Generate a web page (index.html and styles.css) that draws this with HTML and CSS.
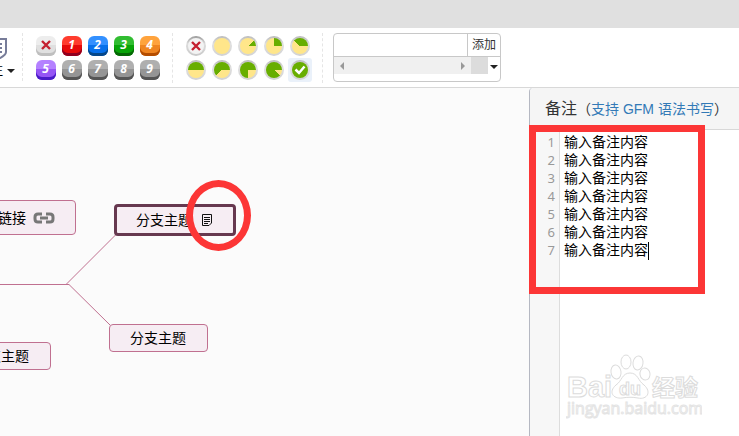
FILE: index.html
```html
<!DOCTYPE html>
<html lang="zh-CN">
<head>
<meta charset="utf-8">
<title>脑图</title>
<link rel="stylesheet" href="styles.css">
</head>
<body>
<div class="titlebar"></div>
<header class="toolbar">
  <button class="note-button" type="button">
    <svg class="note-icon" width="20" height="22" viewBox="0 0 20 22"><path d="M1 1H19V14Q19 17 13 20H1Z" fill="#fff" stroke="#777c99" stroke-width="2"/><path d="M4 6H15M4 10H15M4 14H15" stroke="#777c99" stroke-width="2"/></svg>
    <span class="note-label">备注<i class="caret"></i></span>
  </button>
  <div class="icon-grid priorities">
    <button type="button" aria-label="移除优先级"><span class="badge none"><svg width="10" height="10" viewBox="0 0 10 10"><path d="M1 1L9 9M9 1L1 9" stroke="#c42030" stroke-width="2.4"/></svg></span></button>
    <button type="button"><span class="badge p1">1</span></button>
    <button type="button"><span class="badge p2">2</span></button>
    <button type="button"><span class="badge p3">3</span></button>
    <button type="button"><span class="badge p4">4</span></button>
    <button type="button"><span class="badge p5">5</span></button>
    <button type="button"><span class="badge">6</span></button>
    <button type="button"><span class="badge">7</span></button>
    <button type="button"><span class="badge">8</span></button>
    <button type="button"><span class="badge">9</span></button>
  </div>
  <div class="icon-grid progress">
    <button type="button" aria-label="移除进度"><span class="pie clear"><svg width="10" height="10" viewBox="0 0 10 10"><path d="M1 1L9 9M9 1L1 9" stroke="#c42030" stroke-width="2.4"/></svg></span></button>
    <button type="button" aria-label="未开始"><span class="pie"></span></button>
    <button type="button" aria-label="完成 1/8"><span class="pie e1"></span></button>
    <button type="button" aria-label="完成 1/4"><span class="pie e2"></span></button>
    <button type="button" aria-label="完成 3/8"><span class="pie e3"></span></button>
    <button type="button" aria-label="完成一半"><span class="pie e4"></span></button>
    <button type="button" aria-label="完成 5/8"><span class="pie e5"></span></button>
    <button type="button" aria-label="完成 3/4"><span class="pie e6"></span></button>
    <button type="button" aria-label="完成 7/8"><span class="pie e7"></span></button>
    <button type="button" class="active" aria-label="已完成"><span class="pie e8"><svg width="12" height="10" viewBox="0 0 12 10"><path d="M1.5 4.5L5 8L10.5 1.5" fill="none" stroke="#fff" stroke-width="2.5"/></svg></span></button>
  </div>
  <div class="tag-box">
    <form class="tag-form">
      <input type="text" aria-label="标签">
      <button type="button">添加</button>
    </form>
    <div class="tag-list">
      <div class="track"><i class="arrow left"></i><i class="arrow right"></i></div>
      <div class="corner"></div>
      <button class="more" type="button" aria-label="展开标签"><i class="caret"></i></button>
    </div>
  </div>
</header>
<div class="workspace">
  <main class="canvas">
    <svg class="edges" width="240" height="260" viewBox="0 88 240 260" fill="none" stroke="#c07090"><path d="M0 284.5H69L110 325"/><path d="M66 284.5L116 234.5"/></svg>
    <div class="node link-node">链接<svg width="22" height="12" viewBox="0 0 22 12" fill="none" stroke="#777" stroke-width="3"><path d="M9 2H5Q2 2 2 5V7Q2 10 5 10H9M13 2H17Q20 2 20 5V7Q20 10 17 10H13M7 6H15"/></svg></div>
    <div class="node selected-node">分支主题<svg width="10" height="12" viewBox="0 0 10 12" fill="none" stroke="#111"><path d="M.5 .5H9.5V9L7 11.5H.5ZM2 3.5H8M2 5.5H8M2 7.5H8M2 9.5H6"/></svg></div>
    <div class="node branch-node">分支主题</div>
    <div class="node corner-node">分支主题</div>
    <div class="ring"></div>
  </main>
  <aside class="notes">
    <h2>备注<small>（<a href="#gfm">支持 GFM 语法书写</a>）</small></h2>
    <div class="editor">
      <div class="gutter"><span>1</span><span>2</span><span>3</span><span>4</span><span>5</span><span>6</span><span>7</span></div>
      <textarea aria-label="备注" spellcheck="false">输入备注内容
输入备注内容
输入备注内容
输入备注内容
输入备注内容
输入备注内容
输入备注内容</textarea>
      <i class="cursor"></i>
    </div>
    <div class="frame"></div>
    <svg class="watermark" width="136" height="70" viewBox="0 0 136 70" fill="#fff" stroke="#dcdcdc">
      <g class="brand"><text x="1" y="45" font-size="29">Bai</text><text x="86" y="44" font-size="23">经验</text></g>
      <path d="M64 21C56 21 56 29 50 33C42 40 47 47 56 46C62 45 66 45 72 46C81 48 86 40 78 33C72 29 72 21 64 21Z"/>
      <ellipse cx="50" cy="20" rx="5" ry="7" transform="rotate(-8 50 20)"/><ellipse cx="60" cy="10" rx="5" ry="7"/><ellipse cx="72" cy="11" rx="5" ry="7" transform="rotate(8 72 11)"/><ellipse cx="79" cy="22" rx="5" ry="6" transform="rotate(-12 79 22)"/>
      <text class="du" x="53" y="43" font-size="18">du</text>
      <text class="site" x="1" y="62" font-size="16">jingyan.baidu.com</text>
    </svg>
  </aside>
</div>
</body>
</html>
```
FILE: styles.css
```css
* { box-sizing: border-box; }
body {
  margin: 0;
  height: 100vh;
  display: flex;
  flex-direction: column;
  overflow: hidden;
  background: #fbfbfb;
  color: #000;
  font: 14px/20px "Liberation Sans", "Noto Sans CJK SC", sans-serif;
}
button, input, textarea {
  margin: 0;
  padding: 0;
  border: 0;
  outline: 0;
  background: none;
  color: inherit;
  font: inherit;
}
svg { display: block; flex: none; }

.titlebar { flex: none; height: 28px; background: #e0e0e0; }
.toolbar {
  flex: none;
  display: flex;
  align-items: flex-start;
  height: 60px;
  padding-top: 5px;
  background: #fff;
  border-bottom: 1px solid #d8d8d8;
}
.note-button {
  width: 23px;
  height: 48px;
  padding-top: 5px;
  display: flex;
  flex-direction: column;
  align-items: flex-end;
  overflow: hidden;
  border-right: 1px dashed #e5e5e5;
}
.note-icon { margin-right: 15px; }
.note-label {
  display: flex;
  align-items: center;
  gap: 4px;
  margin-right: 7px;
  font-size: 12px;
  line-height: 22px;
  white-space: nowrap;
}
.caret {
  border: 4px solid transparent;
  border-top-color: #222;
  border-bottom: 0;
}
.icon-grid {
  display: grid;
  grid-template-columns: repeat(5, 24px);
  column-gap: 2px;
  height: 50px;
  padding: 1px 10px 1px 11px;
  border-right: 1px dashed #e5e5e5;
}
.icon-grid button {
  display: flex;
  align-items: center;
  justify-content: center;
  width: 24px;
  height: 24px;
  border-radius: 3px;
}
.icon-grid .active { background: #eaf1fa; }
.badge {
  display: flex;
  align-items: center;
  justify-content: center;
  width: 20px;
  height: 20px;
  padding: 0 1px 3px 0;
  border-radius: 6px;
  background: linear-gradient(#afafaf 45%, #959595 45%);
  box-shadow: inset 0 -3px #555;
  color: #fff;
  font: italic bold 12px/16px "Open Sans", sans-serif;
}
.none { padding-right: 0; background: linear-gradient(#ededed 45%, #e0e0e0 45%); box-shadow: inset 0 -3px #bfbfbf; }
.p1 { background: linear-gradient(#ff3c2e 45%, #e60b0b 45%); box-shadow: inset 0 -3px #900020; }
.p2 { background: linear-gradient(#3390ff 45%, #0870ea 45%); box-shadow: inset 0 -3px #064788; }
.p3 { background: linear-gradient(#31bd31 45%, #08a508 45%); box-shadow: inset 0 -3px #056705; }
.p4 { background: linear-gradient(#ffa33d 45%, #ef8521 45%); box-shadow: inset 0 -3px #b44d00; }
.p5 { background: linear-gradient(#b481ff 45%, #9656f5 45%); box-shadow: inset 0 -3px #4a1cc7; }
.pie {
  --from: 0deg;
  --done: 0deg;
  display: flex;
  align-items: center;
  justify-content: center;
  width: 20px;
  height: 20px;
  border: 2px solid transparent;
  border-radius: 50%;
  background:
    conic-gradient(from var(--from), #68ae00 var(--done), #ffe68a var(--done)) padding-box,
    linear-gradient(#bbb, #e0e0e0 40%, #d2d2d2) border-box;
}
.clear {
  background:
    linear-gradient(#f3f3f3, #f3f3f3) padding-box,
    linear-gradient(#999, #ddd 40%, #c8c8c8) border-box;
}
.e1 { --from: 45deg; --done: 45deg; }
.e2 { --done: 90deg; }
.e3 { --from: -45deg; --done: 135deg; }
.e4 { --from: -90deg; --done: 180deg; }
.e5 { --from: -135deg; --done: 225deg; }
.e6 { --from: 180deg; --done: 270deg; }
.e7 { --from: 135deg; --done: 315deg; }
.e8 { --done: 360deg; }

.tag-box {
  width: 168px;
  height: 49px;
  margin-left: 10px;
  border: 1px solid #c8c8c8;
  border-radius: 4px;
}
.tag-form { display: flex; height: 23px; border-bottom: 1px solid #c8c8c8; }
.tag-form input { flex: 1; min-width: 0; }
.tag-form button {
  width: 33px;
  border-left: 1px solid #c8c8c8;
  color: #333;
  font-size: 12px;
  white-space: nowrap;
}
.tag-list { display: flex; height: 17px; }
.track {
  flex: 1;
  display: flex;
  align-items: center;
  justify-content: space-between;
  padding: 0 6px;
  background: #f0f0f0;
}
.arrow { border: 4px solid transparent; }
.left { border-left: 0; border-right-color: #999; }
.right { border-right: 0; border-left-color: #999; }
.corner { width: 17px; background: #dcdcdc; }
.more { width: 12px; display: flex; align-items: center; justify-content: center; }
.more .caret { margin-top: 3px; }

.workspace { flex: 1; min-height: 0; display: flex; }
.canvas { position: relative; flex: 1; overflow: hidden; }
.edges { position: absolute; left: 0; top: 0; }
.node {
  position: absolute;
  display: flex;
  align-items: center;
  height: 28px;
  padding: 0 20px;
  border: 1px solid #c07090;
  border-radius: 4px;
  background: #f6edf3;
  white-space: nowrap;
}
.link-node { left: -23px; top: 112px; height: 35px; gap: 7px; width: 99px; }
.selected-node {
  left: 114px;
  top: 116px;
  width: 122px;
  height: 32px;
  padding: 0 19px;
  gap: 10px;
  border: 3px solid #66384f;
}
.branch-node { left: 109px; top: 236px; width: 99px; }
.corner-node { left: -48px; top: 254px; width: 99px; }
.ring {
  position: absolute;
  left: 186px;
  top: 92px;
  width: 65px;
  height: 71px;
  border: 7px solid #fc3636;
  border-radius: 50%;
}

.notes {
  position: relative;
  width: 210px;
  display: flex;
  flex-direction: column;
  border-left: 1px solid #b5b8c2;
  border-top-left-radius: 4px;
  background: #fff;
}
.notes h2 {
  flex: none;
  height: 42px;
  margin: 0;
  padding-left: 15px;
  border-bottom: 1px solid #d8d8d8;
  border-top-left-radius: 4px;
  background: #f5f5f5;
  color: #333;
  font-size: 16px;
  font-weight: normal;
  line-height: 42px;
  white-space: nowrap;
}
.notes small { font-size: 14px; }
.notes a { color: #337ab7; text-decoration: none; }
.editor { position: relative; flex: 1; min-height: 0; display: flex; }
.gutter {
  display: flex;
  flex-direction: column;
  width: 30px;
  padding: 3px 4px 0 0;
  border-right: 1px solid #ddd;
  background: #f7f7f7;
  color: #999;
  font: 13px/18px "Noto Sans", sans-serif;
  text-align: right;
}
.editor textarea {
  flex: 1;
  min-width: 0;
  padding: 3px 4px;
  resize: none;
  line-height: 18px;
}
.cursor { position: absolute; left: 118px; top: 112px; width: 1px; height: 18px; background: #000; }
.frame {
  position: absolute;
  left: -1px;
  top: 37px;
  width: 176px;
  height: 169px;
  border: 7px solid #fc3636;
}
.watermark { position: absolute; left: 36px; top: 264px; }
.watermark text { font-family: "Liberation Sans", "Noto Sans CJK SC", sans-serif; }
.brand, .du { font-weight: bold; }
.watermark .site { font-family: "Open Sans", sans-serif; stroke: #e4e4e4; }
```
